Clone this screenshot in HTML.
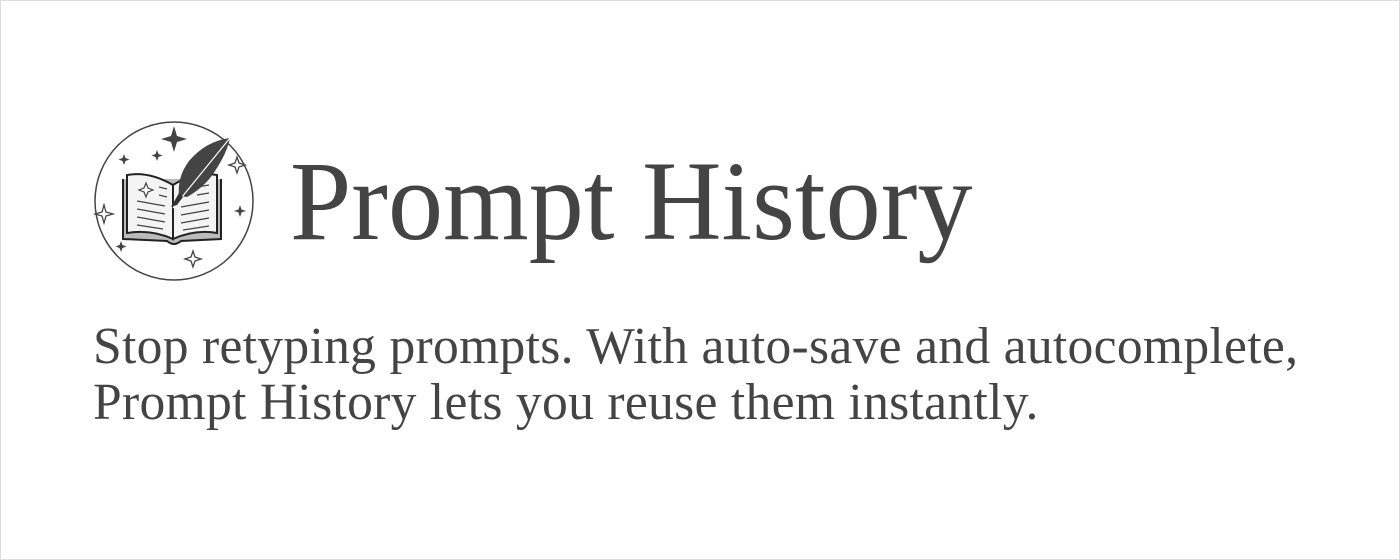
<!DOCTYPE html>
<html><head><style>
html,body{margin:0;padding:0;background:#fff;}
body{width:1400px;height:560px;position:relative;overflow:hidden;box-sizing:border-box;border:1px solid #ddd;font-family:"Liberation Serif",serif;color:#444;}
.t{position:absolute;white-space:nowrap;transform-origin:0 0;}
#title{left:289px;top:144px;font-size:113px;line-height:113px;transform:scaleX(0.975);}
.s{font-size:52px;line-height:52px;left:92px;transform:scaleX(0.992);letter-spacing:0.3px;}
</style></head><body>
<svg style="position:absolute;left:90px;top:118px" width="166" height="166" viewBox="90 118 166 166">
<circle cx="173" cy="200" r="79" fill="none" stroke="#444" stroke-width="1.5"/>
<g fill="#444">
<path d="M173 125 l3 10 l10 3 l-10 3 l-3 10 l-3 -10 l-10 -3 l10 -3z"/>
<path d="M123 153 l1.5 4 l4 1.5 l-4 1.5 l-1.5 4 l-1.5 -4 l-4 -1.5 l4 -1.5z"/>
<path d="M156 149 l1.5 4 l4 1.5 l-4 1.5 l-1.5 4 l-1.5 -4 l-4 -1.5 l4 -1.5z"/>
<path d="M239 204 l1.5 4.5 l4.5 1.5 l-4.5 1.5 l-1.5 4.5 l-1.5 -4.5 l-4.5 -1.5 l4.5 -1.5z"/>
<path d="M120 240 l1.5 4 l4 1.5 l-4 1.5 l-1.5 4 l-1.5 -4 l-4 -1.5 l4 -1.5z"/>
</g>
<g fill="#fff" stroke="#444" stroke-width="1.3">
<path d="M236 156 l2 6 l6 2 l-6 2 l-2 6 l-2 -6 l-6 -2 l6 -2z"/>
<path d="M103 204 l2 7 l7 2 l-7 2 l-2 7 l-2 -7 l-7 -2 l7 -2z"/>
<path d="M192 250 l2 6 l6 2 l-6 2 l-2 6 l-2 -6 l-6 -2 l6 -2z"/>
</g>
<path d="M122 178 L122 238 L166 240 Q173 246 180 240 L220 238 L220 178" fill="#bbb" stroke="#222" stroke-width="2"/>
<path d="M126 174 Q148 170 172 184 L172 238 Q150 228 126 232Z" fill="#f4f4f4" stroke="#222" stroke-width="2"/>
<path d="M172 184 Q194 170 216 174 L216 232 Q194 228 172 238Z" fill="#f4f4f4" stroke="#222" stroke-width="2"/>
<g stroke="#444" stroke-width="1.2">
<path d="M136 200 l28 5 M136 208 l28 5 M136 216 l28 5 M136 224 l26 4 M158 186 l8 2 M158 194 l8 2"/>
<path d="M180 206 l28 -5 M180 214 l28 -5 M180 222 l28 -5 M182 229 l26 -4 M196 186 l12 -2 M196 194 l12 -2"/>
</g>
<path d="M145 182 l2 5 l5 2 l-5 2 l-2 5 l-2 -5 l-5 -2 l5 -2z" fill="#fff" stroke="#444" stroke-width="1.2"/>
<path d="M229 137 Q205 140 188 160 Q176 176 178 195 L186 196 Q204 186 214 170 Q226 152 229 137Z" fill="#444"/>
<path d="M229 137 L172 207" stroke="#fff" stroke-width="1.2"/>
<path d="M178 192 L170 206 L176 204 L182 196Z" fill="#333"/>
</svg>
<div class="t" id="title">Prompt History</div>
<div class="t s" style="top:320px">Stop retyping prompts. With auto-save and autocomplete,</div>
<div class="t s" style="top:376px">Prompt History lets you reuse them instantly.</div>
</body></html>
